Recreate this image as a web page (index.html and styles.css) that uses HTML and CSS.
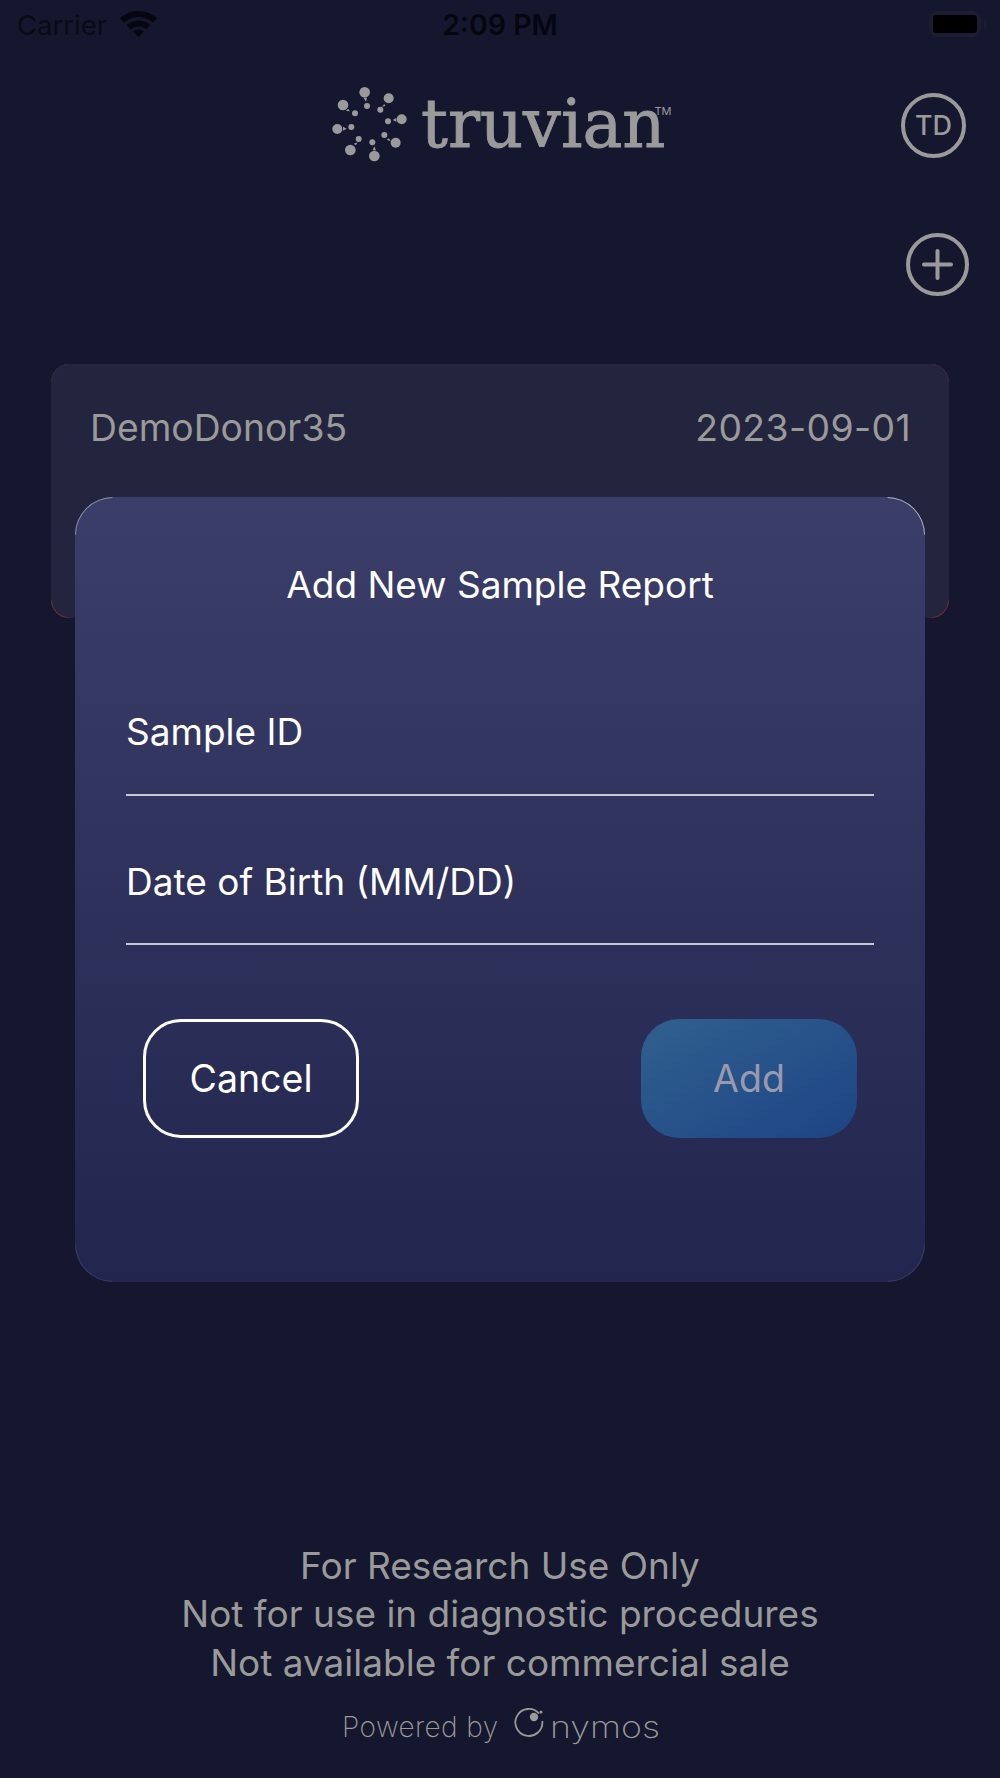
FILE: index.html
```html
<!DOCTYPE html>
<html lang="en">
<head>
<meta charset="utf-8">
<title>Add New Sample Report</title>
<link rel="stylesheet" href="styles.css">
</head>
<body>
<div class="page">
  <div class="status">
    <div class="status-left">
      <span class="carrier">Carrier</span>
      <svg class="wifi" viewBox="0 0 37 26"><path d="M18.5 0C11.5 0 5.2 2.6 0 7.2l4 4.4C8 8 13 6 18.5 6S29 8 33 11.6l4-4.4C31.800 2.600 25.500 0 18.500 0z"/><path d="M18.500 9.500c-4.500 0-8.500 1.600-11.800 4.500l4 4.300c2.100-1.800 4.800-2.900 7.800-2.900s5.700 1.100 7.800 2.900l4-4.300C27 11.100 23 9.500 18.500 9.500z"/><path d="M18.500 18.500c-2 0-3.800.7-5.200 1.900l5.200 5.600 5.200-5.600c-1.400-1.200-3.200-1.900-5.200-1.900z"/></svg>
    </div>
    <span class="time">2:09 PM</span>
    <div class="battery"><div class="battery-shell"><div class="battery-fill"></div></div><div class="battery-nub"></div></div>
  </div>

  <div class="brand-row">
    <div></div>
    <div class="logo">
      <svg class="logo-mark" viewBox="0 0 300 300">
        <g fill="#9a9a9a">
          <circle cx="134" cy="67" r="16"/><circle cx="206" cy="85" r="15"/><circle cx="245" cy="148" r="15"/><circle cx="227" cy="218" r="15"/><circle cx="163" cy="258" r="16"/><circle cx="91" cy="240" r="16"/><circle cx="52" cy="177" r="15"/><circle cx="69" cy="105" r="16"/>
          <circle cx="141" cy="108" r="9"/><circle cx="181" cy="119" r="9"/><circle cx="204" cy="154" r="9"/><circle cx="193" cy="195" r="9"/><circle cx="157" cy="217" r="9"/><circle cx="116" cy="207" r="9"/><circle cx="94" cy="171" r="9"/><circle cx="105" cy="130" r="9"/>
          <path d="M131 84l10 0-3 11zM193 102l-7 8 10-2zM229 144l0 11-11-5zM207 205l5 9-12-5zM158 241l10 0-5-12zM108 226l-7-5 12-4zM69 170l0 12 11-6zM84 116l6 8-12-1z"/>
        </g>
      </svg>
      <span class="wordmark">truvian</span><span class="tm">TM</span>
    </div>
    <div class="avatar">TD</div>
  </div>

  <div class="add-row">
    <svg class="add-icon" viewBox="0 0 63 63"><circle cx="31.500" cy="31.500" r="29.500" fill="none" stroke="#9a9a9a" stroke-width="4"/><path d="M31.500 18v27M18 31.500h27" fill="none" stroke="#9a9a9a" stroke-width="4" stroke-linecap="round"/></svg>
  </div>

  <div class="card">
    <span class="card-text">DemoDonor35</span>
    <span class="card-text card-date">2023-09-01</span>
    <i class="edge edge-tl"></i><i class="edge edge-tr"></i><i class="edge edge-bl"></i><i class="edge edge-br"></i>
  </div>

  <div class="footer">
    <p class="notice">For Research Use Only</p>
    <p class="notice">Not for use in diagnostic procedures</p>
    <p class="notice">Not available for commercial sale</p>
    <div class="powered">
      <span class="powered-label">Powered by</span>
      <span class="onymos">
        <svg class="onymos-o" viewBox="0 0 32 32"><path d="M26 6.500A13.500 13.500 0 1 0 29.300 14" fill="none" stroke="#9a9a9a" stroke-width="1.800"/><circle cx="21" cy="10" r="4.200" fill="#9a9a9a"/><circle cx="28" cy="5" r="1.500" fill="#9a9a9a"/></svg><span class="onymos-text">nymos</span>
      </span>
    </div>
  </div>

  <div class="modal">
    <i class="mcorner mcorner-tl"></i><i class="mcorner mcorner-tr"></i><i class="mcorner mcorner-bl"></i><i class="mcorner mcorner-br"></i>
    <h2 class="modal-title">Add New Sample Report</h2>
    <div class="field field-first">Sample ID</div>
    <div class="field">Date of Birth (MM/DD)</div>
    <div class="actions">
      <button class="btn btn-cancel">Cancel</button>
      <button class="btn btn-add">Add</button>
    </div>
  </div>
</div>
</body>
</html>
```

FILE: styles.css
```css
* { box-sizing: border-box; }
html, body { margin: 0; padding: 0; }
body { background: #15172e; font-family: Inter, "Liberation Sans", sans-serif; }
.page { position: relative; width: 1000px; height: 1778px; display: flex; flex-direction: column; background: #15172e; overflow: hidden; }

.status { height: 50px; display: grid; grid-template-columns: 1fr auto 1fr; align-items: center; padding: 0 13px 0 17px; color: #090a16; }
.status-left { display: flex; align-items: center; gap: 13px; }
.carrier { font-size: 27.500px; line-height: 50px; }
.wifi { width: 37px; height: 26px; fill: #050610; margin-top: -2px; }
.time { font-size: 28.500px; font-weight: 600; line-height: 50px; margin-left: -4px; color: #05060f; }
.battery { justify-self: end; display: flex; align-items: center; gap: 3px; margin-top: -2px; }
.battery-shell { width: 52px; height: 26px; border: 4px solid #1c1d33; border-radius: 8px; }
.battery-fill { width: 100%; height: 100%; background: #000; border-radius: 3px; }
.battery-nub { width: 3px; height: 9px; background: #1c1d33; border-radius: 0 3px 3px 0; }

.brand-row { margin-top: 37px; height: 74px; display: grid; grid-template-columns: 1fr auto 1fr; }
.logo { display: flex; align-items: flex-start; position: relative; width: 340px; }
.logo-mark { width: 100px; height: 100px; margin: -17px 1px 0 -10px; flex: none; }
.wordmark { font-family: "DejaVu Serif", "Liberation Serif", serif; font-size: 67px; line-height: 74px; color: #9a9a9a; -webkit-text-stroke: .9px #9a9a9a; }
.tm { font-size: 11px; color: #9a9a9a; margin-top: 17px; margin-left: -11px; }
.avatar { justify-self: end; margin: 6px 34px 0 0; width: 65px; height: 65px; border: 4px solid #9a9a9a; border-radius: 50%; color: #9a9a9a; font-size: 27px; font-weight: 500; display: flex; align-items: center; justify-content: center; }

.add-row { margin-top: 72px; padding-right: 31px; display: flex; justify-content: flex-end; }
.add-icon { width: 63px; height: 63px; }

.card { position: relative; margin: 68px 51px 0; height: 254px; background: #23243d; border-radius: 18px; display: flex; justify-content: space-between; align-items: flex-start; padding: 41px 38px 0 39px; }
.card-text { font-size: 37.300px; line-height: 46px; color: #9a9a9a; }
.card-date { letter-spacing: .4px; }
.edge { position: absolute; width: 18px; height: 18px; border: 1px solid transparent; }
.edge-tl { left: 0; top: 0; border-top-left-radius: 18px; border-top-color: #3a2a40; border-left-color: #3a2a40; }
.edge-tr { right: 0; top: 0; border-top-right-radius: 18px; border-top-color: #3a2a40; border-right-color: #3a2a40; }
.edge-bl { left: 0; bottom: 0; border-bottom-left-radius: 18px; border-bottom-color: #6e2a3c; border-left-color: #6e2a3c; }
.edge-br { right: 0; bottom: 0; border-bottom-right-radius: 18px; border-bottom-color: #6e2a3c; border-right-color: #6e2a3c; }

.footer { margin-top: auto; padding-bottom: 25px; text-align: center; }
.notice { margin: 0; font-size: 37px; line-height: 48.500px; color: #9a9a9a; }
.powered { margin-top: 14px; height: 52px; display: flex; justify-content: center; align-items: center; gap: 14px; color: #9a9a9a; }
.powered-label { font-family: Inter, sans-serif; font-size: 28px; font-weight: 200; letter-spacing: .4px; }
.onymos { display: flex; align-items: center; }
.onymos-o { width: 32px; height: 32px; margin-top: -8px; margin-right: 5px; }
.onymos-text { font-family: Inter, sans-serif; font-size: 30px; font-weight: 200; line-height: 40px; display: inline-block; transform: scaleX(1.19); transform-origin: left center; margin-right: 16px; }

.modal { position: absolute; left: 75px; top: 497px; width: 850px; height: 785px; border-radius: 38px; background: linear-gradient(180deg, #3b3e68 0%, #22264f 100%); padding: 0 51px; color: #fff; }
.mcorner { position: absolute; width: 38px; height: 38px; border: 1px solid transparent; }
.mcorner-tl { left: 0; top: 0; border-top-left-radius: 38px; border-top-color: #8f90a6; border-left-color: #8f90a6; }
.mcorner-tr { right: 0; top: 0; border-top-right-radius: 38px; border-top-color: #b0b1c2; border-right-color: #b0b1c2; }
.mcorner-bl { left: 0; bottom: 0; border-bottom-left-radius: 38px; border-bottom-color: #3a3d60; border-left-color: #3a3d60; }
.mcorner-br { right: 0; bottom: 0; border-bottom-right-radius: 38px; border-bottom-color: #3a3d60; border-right-color: #3a3d60; }
.modal-title { margin: 0; padding-top: 63px; text-align: center; font-size: 37px; font-weight: 400; line-height: 50px; }
.field { border-bottom: 2px solid #c9c9d3; font-size: 37px; line-height: 46px; }
.field-first { height: 186px; padding-top: 99px; }
.field + .field { height: 149px; padding-top: 63px; }
.actions { display: flex; justify-content: space-between; padding: 74px 17px 0 17px; }
.btn { width: 216px; height: 119px; border-radius: 38px; font: 400 37.500px Inter, sans-serif; }
.btn-cancel { background: transparent; border: 3px solid #fff; color: #fff; }
.btn-add { background: linear-gradient(150deg, #30608f 0%, #1d4484 100%); border: 0; color: #9a9aae; }
```
